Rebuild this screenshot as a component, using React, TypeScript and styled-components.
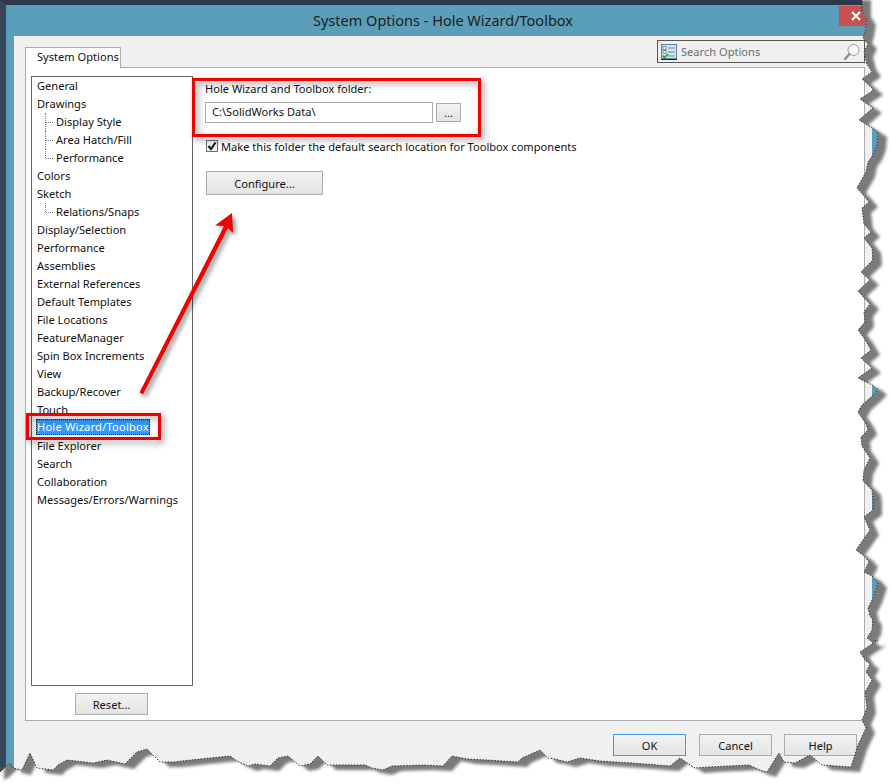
import React from 'react';
import styled, { createGlobalStyle } from 'styled-components';

const GlobalStyle = createGlobalStyle`
  html, body {
    margin: 0;
    padding: 0;
    background: #fff;
  }
`;

const FONT = `'Noto Sans', 'Open Sans', 'Liberation Sans', sans-serif`;

const Page = styled.div`
  position: relative;
  width: 892px;
  height: 783px;
  overflow: hidden;
  background: #fff;
  font-family: ${FONT};
  font-size: 11.1px;
  color: #111;
`;

const Frame = styled.div`
  box-sizing: border-box;
  width: 880px;
  height: 783px;
  display: flex;
  flex-direction: column;
  background: #5b9eb9;
  border-top: 5px solid #2d384b;
  border-left: 6px solid #38465a;
  padding: 0 8px 0 8px;
`;

const TitleBar = styled.div`
  position: relative;
  height: 31px;
  flex: none;
  display: flex;
  align-items: center;
  justify-content: center;
  padding-bottom: 2px;
  box-sizing: border-box;
  font-size: 14.5px;
  color: #1c1c1c;
`;

const CloseButton = styled.div`
  position: absolute;
  right: 0;
  top: 1px;
  width: 33px;
  height: 20px;
  display: flex;
  align-items: center;
  justify-content: center;
  background: #c75050;
`;

const Client = styled.div`
  flex: 1;
  display: flex;
  flex-direction: column;
  background: #f0f0f0;
  padding: 0 7px 0 11px;
`;

const TabRow = styled.div`
  height: 31px;
  flex: none;
  display: flex;
  align-items: flex-end;
  justify-content: space-between;
`;

const Tab = styled.div`
  box-sizing: border-box;
  width: 96px;
  height: 21px;
  margin-bottom: -1px;
  position: relative;
  z-index: 1;
  display: flex;
  align-items: center;
  padding: 0 0 3px 11px;
  white-space: nowrap;
  background: #fff;
  border: 1px solid #acacac;
  border-bottom: none;
`;

const SearchBox = styled.div`
  box-sizing: border-box;
  width: 208px;
  height: 23px;
  margin-bottom: 4px;
  display: flex;
  align-items: center;
  gap: 4px;
  padding: 0 3px;
  background: #f0f0f0;
  border: 1px solid #555;
  color: #6d6d6d;
`;

const SearchText = styled.span`
  flex: 1;
`;

const TabPanel = styled.div`
  box-sizing: border-box;
  height: 654px;
  flex: none;
  display: flex;
  gap: 12px;
  padding: 8px 0 0 5px;
  background: #fff;
  border: 1px solid #acacac;
`;

const Sidebar = styled.div`
  width: 162px;
  display: flex;
  flex-direction: column;
  align-items: flex-start;
  gap: 7px;
`;

const ListBox = styled.div`
  box-sizing: border-box;
  width: 100%;
  height: 610px;
  padding: 0 0 0 5px;
  border: 1px solid #646464;
`;

const ResetSlot = styled.div`
  margin-left: 44px;
`;

const Row = styled.div`
  box-sizing: border-box;
  height: 18px;
  padding-bottom: 2px;
  display: flex;
  align-items: center;
  white-space: nowrap;
`;

const Connector = styled.span<{ $last?: boolean }>`
  position: relative;
  width: 11px;
  height: 18px;
  margin: 2px 0 0 8px;
  flex: none;
  box-sizing: border-box;

  &::before {
    content: '';
    position: absolute;
    left: 0;
    top: 0;
    height: ${(p) => (p.$last ? '9px' : '18px')};
    border-left: 1px dotted #777;
  }

  &::after {
    content: '';
    position: absolute;
    left: 1px;
    top: 9px;
    width: 7px;
    border-top: 1px dotted #777;
  }
`;

const Selected = styled.span`
  margin-left: -1px;
  padding: 0 1px;
  height: 16px;
  line-height: 15px;
  letter-spacing: 0.22px;
  background: #3399ff;
  color: #fff;
  outline: 1px dotted #10243a;
  outline-offset: -1px;
`;

const Content = styled.div`
  flex: 1;
  display: flex;
  flex-direction: column;
  align-items: flex-start;
  padding-top: 4px;
`;

const FieldLabel = styled.div`
  height: 18px;
  line-height: 18px;
`;

const FieldRow = styled.div`
  display: flex;
  align-items: center;
  gap: 3px;
  margin-top: 4px;
`;

const PathInput = styled.div`
  box-sizing: border-box;
  width: 228px;
  height: 21px;
  line-height: 18px;
  padding-left: 6px;
  background: #fff;
  border: 1px solid #acacac;
`;

const Button = styled.div<{ $w: number; $h?: number; $default?: boolean }>`
  box-sizing: border-box;
  width: ${(p) => p.$w}px;
  height: ${(p) => p.$h ?? 22}px;
  flex: none;
  display: flex;
  align-items: center;
  justify-content: center;
  background: linear-gradient(#f2f2f2, #e4e4e4);
  border: 1px solid ${(p) => (p.$default ? '#3c9af2' : '#acacac')};
  color: #111;
`;

const CheckRow = styled.div`
  display: flex;
  align-items: center;
  gap: 3px;
  margin: 14px 0 0 1px;
  height: 18px;
`;

const CheckBox = styled.span`
  box-sizing: border-box;
  width: 12px;
  height: 12px;
  display: flex;
  align-items: center;
  justify-content: center;
  background: #f4f4f4;
  border: 1px solid #707070;
`;

const ConfigureWrap = styled.div`
  margin: 16px 0 0 1px;
`;

const Footer = styled.div`
  flex: 1;
  display: flex;
  justify-content: flex-end;
  gap: 12px;
  padding: 13px 8px 0 0;

  & > :first-child {
    margin-right: 1px;
  }
`;

const RedBox = styled.div<{ $x: number; $y: number; $w: number; $h: number }>`
  position: absolute;
  box-sizing: border-box;
  left: ${(p) => p.$x}px;
  top: ${(p) => p.$y}px;
  width: ${(p) => p.$w}px;
  height: ${(p) => p.$h}px;
  border: 3px solid #f00000;
  filter: drop-shadow(3px 3px 3px rgba(0, 0, 0, 0.45));
`;

const Overlay = styled.svg`
  position: absolute;
  left: 0;
  top: 0;
`;

const ArrowOverlay = styled(Overlay)`
  filter: drop-shadow(3px 3px 2px rgba(0, 0, 0, 0.4));
`;

const TORN: [number, number][] = [
  [862, -5], [862, 12], [867, 20], [865, 32], [863, 38], [868, 44], [864, 52], [867, 64],
  [872, 72], [862, 79], [872, 88], [874, 90], [860, 99], [873, 108], [859, 120], [872, 128],
  [878, 132], [877, 145], [873, 155], [868, 162], [866, 172], [857, 188], [864, 196], [869, 202],
  [862, 208], [864, 224], [871, 232], [864, 238], [872, 248], [873, 260], [861, 272], [870, 280],
  [858, 291], [866, 300], [870, 304], [864, 312], [865, 322], [858, 330], [864, 338], [871, 350],
  [861, 358], [872, 368], [858, 378], [872, 385], [878, 390], [871, 397], [862, 405], [858, 412],
  [866, 424], [868, 430], [861, 437], [862, 446], [870, 458], [864, 470], [863, 481], [872, 490],
  [873, 500], [873, 510], [864, 517], [870, 530], [856, 550], [864, 556], [869, 562], [864, 572],
  [872, 576], [878, 583], [873, 598], [868, 608], [870, 616], [873, 620], [872, 630], [867, 638],
  [872, 642], [878, 640], [860, 652], [865, 660], [870, 664], [866, 672], [872, 680], [865, 692],
  [867, 708], [862, 720], [866, 728], [858, 745], [851, 767], [822, 765], [810, 755], [795, 763],
  [784, 762], [779, 753], [767, 772], [760, 770], [749, 765], [709, 767], [695, 768], [680, 758],
  [670, 766], [632, 763], [600, 761], [580, 758], [567, 762], [555, 759], [548, 758], [540, 750],
  [522, 758], [518, 762], [487, 760], [467, 759], [452, 756], [443, 766], [423, 765], [392, 766],
  [383, 770], [372, 768], [365, 765], [335, 765], [327, 765], [318, 756], [310, 764], [300, 766],
  [288, 756], [278, 758], [270, 766], [255, 764], [248, 766], [237, 761], [230, 756], [200, 759],
  [173, 762], [160, 762], [147, 749], [137, 752], [125, 764], [107, 760], [93, 763], [67, 760],
  [58, 765], [53, 770], [37, 768], [30, 753], [22, 770], [13, 768], [10, 763], [0, 772], [-5, 775],
  [-5, -5],
];

const tornPath = 'M' + TORN.map(([x, y]) => `${x} ${y}`).join('L') + 'Z';
const outside = `M-20 -20H912V803H-20Z${tornPath}`;

function TornEdge() {
  return (
    <Overlay width={892} height={783} viewBox="0 0 892 783">
      <defs>
        <filter id="tornBlur" x="-5%" y="-5%" width="110%" height="110%">
          <feGaussianBlur stdDeviation="1.8" />
        </filter>
        <clipPath id="outsideClip">
          <path d={outside} clipRule="evenodd" />
        </clipPath>
      </defs>
      <path d={outside} fill="#fff" fillRule="evenodd" />
      <g clipPath="url(#outsideClip)">
        <path d={tornPath} transform="translate(9 5)" fill="#7a7a7a" filter="url(#tornBlur)" />
      </g>
      <path d={tornPath} fill="none" stroke="#111" strokeWidth="0.8" strokeDasharray="1.5 1.5" />
    </Overlay>
  );
}

function RedArrow() {
  return (
    <ArrowOverlay width={892} height={783} viewBox="0 0 892 783">
      <path
        d="M139.500 392.500 L224 226 L215 225.500 L232 213 L233 233 L228 228 L143 394.500 Z"
        fill="#f40000"
      />
    </ArrowOverlay>
  );
}

function CheckMark() {
  return (
    <svg width="10" height="10" viewBox="0 0 10 10">
      <path d="M1.500 5 L4 8 L8.500 1.500" fill="none" stroke="#111" strokeWidth="2" />
    </svg>
  );
}

function OptionsIcon() {
  return (
    <svg width="16" height="16" viewBox="0 0 16 16">
      <rect x="0.500" y="0.500" width="15" height="14" fill="#d7e6f2" stroke="#5c7f9e" />
      <rect x="2" y="2.500" width="3" height="3" fill="#fff" stroke="#4f7da6" strokeWidth="0.8" />
      <rect x="2" y="6.500" width="3" height="3" fill="#fff" stroke="#4f7da6" strokeWidth="0.8" />
      <path d="M7 4h7M7 8h7M7 12h7" stroke="#6a8aa6" />
      <path d="M1.500 11.500 L3.500 13.500 L7 10" fill="none" stroke="#0fa31a" strokeWidth="1.600" />
      <rect x="0" y="15" width="16" height="1" fill="#222" />
    </svg>
  );
}

function MagnifierIcon() {
  return (
    <svg width="18" height="18" viewBox="0 0 18 18">
      <circle cx="10.500" cy="7" r="5.500" fill="#f8f8f8" stroke="#9a9a9a" />
      <path d="M6.500 11 L2 16" stroke="#8c8c8c" strokeWidth="2.200" strokeLinecap="round" />
    </svg>
  );
}

function CloseGlyph() {
  return (
    <svg width="10" height="10" viewBox="0 0 10 10">
      <path d="M1 1 L9 9 M9 1 L1 9" stroke="#fff" strokeWidth="2" />
    </svg>
  );
}

type Item = { label: string; child?: boolean; last?: boolean; selected?: boolean };

const ITEMS: Item[] = [
  { label: 'General' },
  { label: 'Drawings' },
  { label: 'Display Style', child: true },
  { label: 'Area Hatch/Fill', child: true },
  { label: 'Performance', child: true, last: true },
  { label: 'Colors' },
  { label: 'Sketch' },
  { label: 'Relations/Snaps', child: true, last: true },
  { label: 'Display/Selection' },
  { label: 'Performance' },
  { label: 'Assemblies' },
  { label: 'External References' },
  { label: 'Default Templates' },
  { label: 'File Locations' },
  { label: 'FeatureManager' },
  { label: 'Spin Box Increments' },
  { label: 'View' },
  { label: 'Backup/Recover' },
  { label: 'Touch' },
  { label: 'Hole Wizard/Toolbox', selected: true },
  { label: 'File Explorer' },
  { label: 'Search' },
  { label: 'Collaboration' },
  { label: 'Messages/Errors/Warnings' },
];

function App() {
  return (
    <Page>
      <GlobalStyle />
      <Frame>
        <TitleBar>
          System Options - Hole Wizard/Toolbox
          <CloseButton>
            <CloseGlyph />
          </CloseButton>
        </TitleBar>
        <Client>
          <TabRow>
            <Tab>System Options</Tab>
            <SearchBox>
              <OptionsIcon />
              <SearchText>Search Options</SearchText>
              <MagnifierIcon />
            </SearchBox>
          </TabRow>
          <TabPanel>
            <Sidebar>
              <ListBox>
                {ITEMS.map((item) => (
                  <Row key={item.label + item.child}>
                    {item.child && <Connector $last={item.last} />}
                    {item.selected ? <Selected>{item.label}</Selected> : item.label}
                  </Row>
                ))}
              </ListBox>
              <ResetSlot>
                <Button $w={73}>Reset...</Button>
              </ResetSlot>
            </Sidebar>
            <Content>
              <FieldLabel>Hole Wizard and Toolbox folder:</FieldLabel>
              <FieldRow>
                <PathInput>C:\SolidWorks Data\</PathInput>
                <Button $w={25} $h={19}>...</Button>
              </FieldRow>
              <CheckRow>
                <CheckBox>
                  <CheckMark />
                </CheckBox>
                Make this folder the default search location for Toolbox components
              </CheckRow>
              <ConfigureWrap>
                <Button $w={117} $h={24}>Configure...</Button>
              </ConfigureWrap>
            </Content>
          </TabPanel>
          <Footer>
            <Button $w={73} $default>OK</Button>
            <Button $w={73}>Cancel</Button>
            <Button $w={73}>Help</Button>
          </Footer>
        </Client>
      </Frame>
      <RedArrow />
      <RedBox $x={26} $y={413} $w={135} $h={27} />
      <RedBox $x={192} $y={78} $w={289} $h={59} />
      <TornEdge />
    </Page>
  );
}

export default App;
